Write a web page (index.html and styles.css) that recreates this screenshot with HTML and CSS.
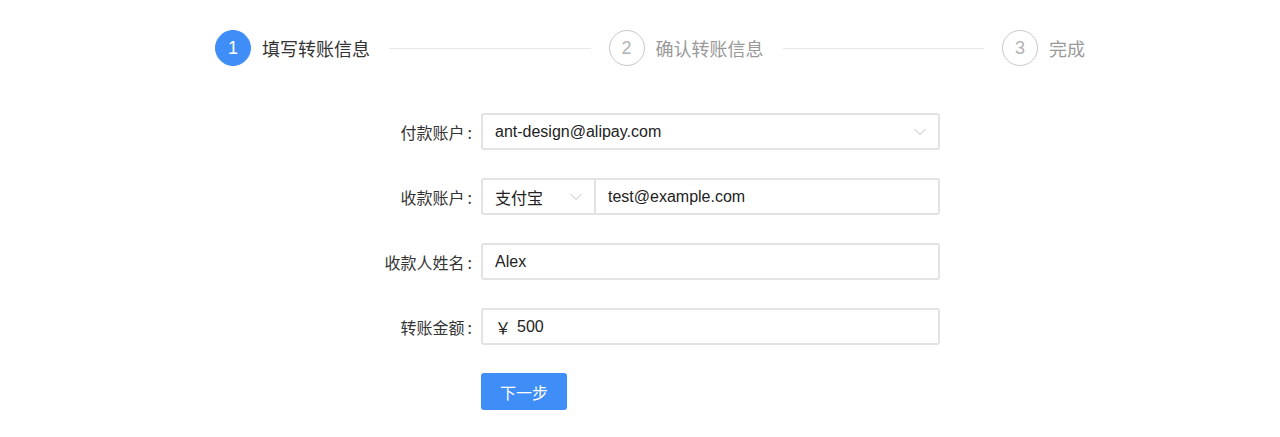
FILE: index.html
```html
<!DOCTYPE html>
<html lang="zh-CN">
<head>
    <meta charset="UTF-8">
    <title>转账</title>
    <link rel="stylesheet" href="styles.css">
</head>
<body>
    <div class="steps">
        <div class="step active">
            <span class="step-icon">1</span>
            <span class="step-title">填写转账信息</span>
            <span class="step-line"></span>
        </div>
        <div class="step">
            <span class="step-icon">2</span>
            <span class="step-title">确认转账信息</span>
            <span class="step-line"></span>
        </div>
        <div class="step last">
            <span class="step-icon">3</span>
            <span class="step-title">完成</span>
        </div>
    </div>

    <form class="form">
        <label class="form-label">付款账户<span class="colon">:</span></label>
        <div class="select wide">
            <span>ant-design@alipay.com</span>
            <svg class="arrow" viewBox="0 0 12 8"><path d="M0.5 1 L6 6.5 L11.5 1" /></svg>
        </div>

        <label class="form-label">收款账户<span class="colon">:</span></label>
        <div class="group">
            <div class="select small">
                <span>支付宝</span>
                <svg class="arrow" viewBox="0 0 12 8"><path d="M0.5 1 L6 6.5 L11.5 1" /></svg>
            </div>
            <div class="input grow">test@example.com</div>
        </div>

        <label class="form-label">收款人姓名<span class="colon">:</span></label>
        <div class="input">Alex</div>

        <label class="form-label">转账金额<span class="colon">:</span></label>
        <div class="input"><span class="prefix">￥</span>500</div>

        <span></span>
        <div><button type="button" class="btn">下一步</button></div>
    </form>
</body>
</html>
```

FILE: styles.css
```css
body {
    margin: 0;
    background: #fff;
    font-family: "Liberation Sans", "Noto Sans CJK SC", sans-serif;
    color: rgba(0, 0, 0, 0.85);
}

.steps {
    display: flex;
    width: 870px;
    margin: 30px 0 0 215px;
}

.step {
    display: flex;
    align-items: center;
    flex: 1;
}

.step.last {
    flex: none;
}

.step-icon {
    width: 34px;
    height: 34px;
    border: 1px solid #c8c8c8;
    border-radius: 50%;
    display: flex;
    align-items: center;
    justify-content: center;
    font-size: 18px;
    color: #b3b3b3;
    flex: none;
}

.step.active .step-icon {
    background: #3f8ef7;
    border-color: #3f8ef7;
    color: #fff;
}

.step-title {
    margin-left: 11px;
    font-family: "Noto Sans CJK SC", sans-serif;
    font-size: 18px;
    color: #999;
    white-space: nowrap;
}

.step.active .step-title {
    color: #333;
}

.step-line {
    flex: 1;
    height: 1px;
    background: #e8e8e8;
    margin: 0 18px 0 19px;
}

.form {
    display: grid;
    grid-template-columns: 160px 459px;
    column-gap: 9px;
    row-gap: 28px;
    margin: 47px 0 0 312px;
    align-items: center;
}

.form-label {
    text-align: right;
    font-family: "Noto Sans CJK SC", sans-serif;
    font-size: 16px;
    color: #333;
}

.colon {
    margin-left: 3px;
}

.input,
.select {
    box-sizing: border-box;
    height: 37px;
    border: 2px solid #e3e3e3;
    border-radius: 3px;
    display: flex;
    align-items: center;
    padding: 0 12px;
    font-size: 16px;
    color: #222;
    font-family: "Liberation Sans", "Noto Sans CJK SC", sans-serif;
}

.select {
    justify-content: space-between;
}

.arrow {
    width: 12px;
    height: 8px;
    fill: none;
    stroke: #bdbdbd;
    stroke-width: 1;
}

.group {
    display: flex;
}

.select.small {
    width: 115px;
    border-radius: 3px 0 0 3px;
    font-family: "Noto Sans CJK SC", sans-serif;
}

.input.grow {
    flex: 1;
    border-left: none;
    border-radius: 0 3px 3px 0;
}

.prefix {
    margin-right: 6px;
}

.btn {
    width: 86px;
    height: 37px;
    border: none;
    border-radius: 3px;
    background: #3f8ef7;
    color: #fff;
    font-size: 16px;
    font-family: "Noto Sans CJK SC", sans-serif;
    cursor: pointer;
}
```
